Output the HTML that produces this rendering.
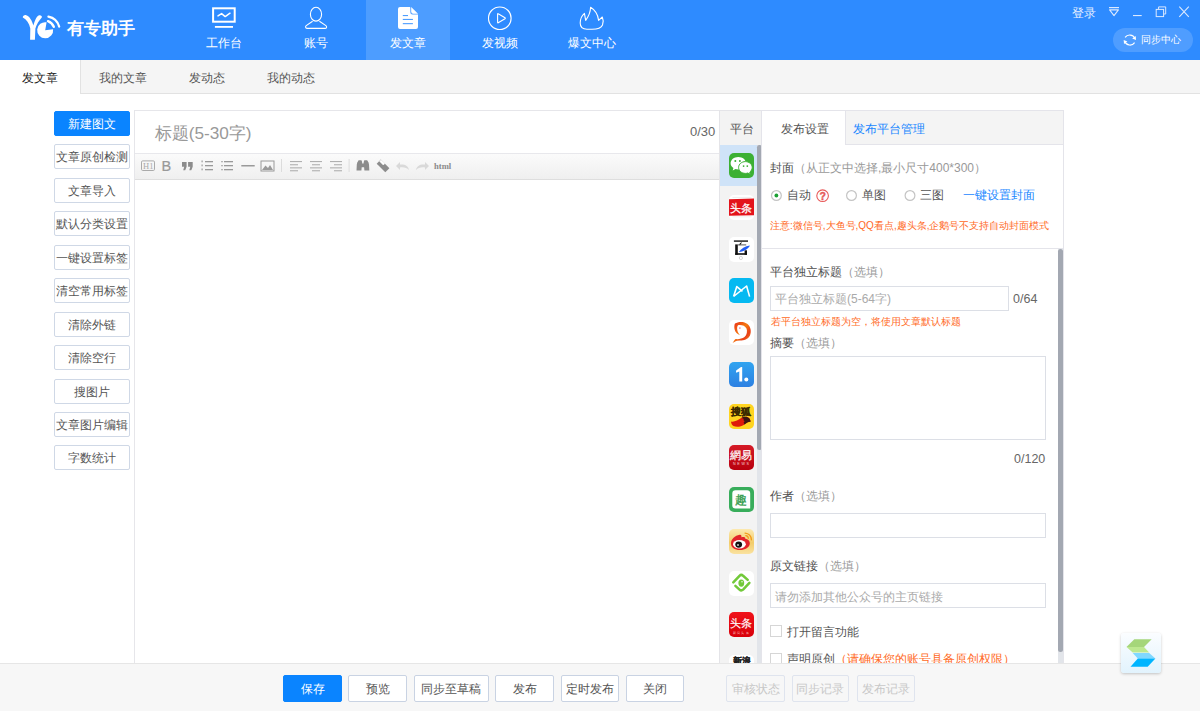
<!DOCTYPE html>
<html><head><meta charset="utf-8">
<style>
*{margin:0;padding:0;box-sizing:border-box}
html,body{width:1200px;height:711px;overflow:hidden;background:#fff;font-family:"Liberation Sans",sans-serif;font-size:12px;color:#333}
.a{position:absolute}
.t{position:absolute;white-space:nowrap;line-height:20px}
#hdr{left:0;top:0;width:1200px;height:60px;background:#2e8bff}
.nav{position:absolute;top:0;width:84px;height:60px;color:#fff;text-align:center}
.nav .lbl{position:absolute;left:0;width:84px;top:33px;line-height:20px;font-size:12px}
.nav svg{position:absolute;left:26px;top:2px}
.lbtn{position:absolute;left:54px;width:75.5px;height:25px;border:1px solid #cfd8e6;border-radius:2px;background:#fff;color:#555;text-align:center;line-height:25px;font-size:12px;white-space:nowrap;overflow:visible}
.fbtn{position:absolute;top:675px;height:27px;border:1px solid #c9d3e3;border-radius:2px;background:#fff;color:#555;text-align:center;line-height:27px;font-size:12px;white-space:nowrap}
.pic{position:absolute;left:729px;width:25px;height:25px;border-radius:5px;overflow:hidden}
.lab{position:absolute;left:770px;white-space:nowrap;line-height:20px;font-size:12px;color:#505050}
.lab span{color:#999}
.inp{position:absolute;left:770px;background:#fff;border:1px solid #dcdfe6}
.org{color:#ff6a26}
</style></head><body>

<!-- HEADER -->
<div id="hdr" class="a"></div>
<div class="a" style="left:366px;top:0;width:84px;height:60px;background:#4d9dff"></div>
<svg class="a" style="left:18px;top:8px" width="48" height="38" viewBox="0 0 48 38">
 <path d="M4.8 9.6 C4.6 8 6.4 6.8 8.2 7.2 C11.5 8.2 14 12.5 15.4 17.4 C16.8 12.5 18.5 8.5 20.6 7.4 C22.4 6.6 24.4 7.8 23.8 9.4 C21 12.5 18.6 16 17.4 20.5 L16.9 31.8 L12.1 31.8 L12.3 20.5 C11.2 15.5 8.5 11.5 4.8 9.6 Z" fill="#fff"/>
 <path d="M27.2 22.2 L28.6 14.3 A8 8 0 1 0 35.1 21.2 Z" fill="#fff"/>
 <path d="M30 13.2 A9.8 9.8 0 0 1 35.8 18.8" stroke="#fff" stroke-width="2.4" fill="none" stroke-linecap="round"/>
 <path d="M30.4 8.6 A14.2 14.2 0 0 1 41.2 18.6" stroke="#fff" stroke-width="2.2" fill="none" stroke-linecap="round"/>
</svg>
<div class="t" style="left:67px;top:18.5px;font-size:17px;color:#fff;font-weight:bold;">有专助手</div>

<!-- nav items -->
<div class="nav" style="left:182px">
 <svg width="32" height="30" viewBox="0 0 32 30"><g transform="translate(-208 -2)">
  <rect x="213.1" y="8.3" width="21.6" height="13.4" fill="none" stroke="#fff" stroke-width="2"/>
  <path d="M218 15.9 L221.6 13.6 L225.2 16.6 L230 13.2" fill="none" stroke="#fff" stroke-width="1.5" stroke-linecap="round" stroke-linejoin="round"/>
  <rect x="214.9" y="26" width="18.1" height="1.8" fill="#fff"/>
 </g></svg>
 <div class="lbl">工作台</div>
</div>
<div class="nav" style="left:274px">
 <svg width="32" height="30" viewBox="0 0 32 30"><g transform="translate(-300 -2)">
  <ellipse cx="316" cy="14.2" rx="5.6" ry="6.9" fill="none" stroke="#fff" stroke-width="1.1"/>
  <path d="M312.6 21.2 L306.2 25.6 Q305.4 26.2 305.6 27.2 Q305.8 28.4 307 28.4 L325.3 28.4 Q326.5 28.4 326.6 27.2 Q326.7 26.2 325.9 25.6 L319.4 21.2" fill="none" stroke="#fff" stroke-width="1.1" stroke-linejoin="round"/>
 </g></svg>
 <div class="lbl">账号</div>
</div>
<div class="nav" style="left:366px">
 <svg width="32" height="30" viewBox="0 0 32 30"><g transform="translate(-392 -2)">
  <path d="M400 7.1 L409.8 7.1 L410.3 7.6 L410.3 12.2 Q410.3 14.6 412.6 14.6 L418 14.6 L418 27 Q418 29 416 29 L400 29 Q398 29 398 27 L398 9.1 Q398 7.1 400 7.1 Z" fill="#fff"/>
  <path d="M411.2 7.1 L418 13.8 L413.2 13.8 Q411.2 13.8 411.2 11.8 Z" fill="#fff"/>
  <rect x="402.8" y="15" width="5.2" height="1.1" fill="#4d9dff"/>
  <rect x="402.8" y="18.9" width="10.1" height="1.1" fill="#4d9dff"/>
  <rect x="402.8" y="23.1" width="10.1" height="1.1" fill="#4d9dff"/>
 </g></svg>
 <div class="lbl">发文章</div>
</div>
<div class="nav" style="left:458px">
 <svg width="32" height="30" viewBox="0 0 32 30"><g transform="translate(-484 -2)">
  <circle cx="499.8" cy="18.25" r="11.3" fill="none" stroke="#fff" stroke-width="1.1"/>
  <path d="M498.2 13.8 Q497.6 13.4 497.6 14.2 L497.6 22.4 Q497.6 23.2 498.2 22.8 L505 18.7 Q505.6 18.25 505 17.8 Z" fill="none" stroke="#fff" stroke-width="1.1" stroke-linejoin="round"/>
 </g></svg>
 <div class="lbl">发视频</div>
</div>
<div class="nav" style="left:550px">
 <svg width="32" height="30" viewBox="0 0 32 30"><g transform="translate(-576 -2)">
  <path d="M590.6 7.3 C595 10 598 14.5 598.6 20.4 L602.3 17 C603.4 19.5 603.4 22.5 602.5 25 C601 28.5 597 29.2 592 29.2 L587 29.2 C583 29.2 580.2 27 580.2 23 C580.2 18.5 582 15.5 584.4 13.4 L585.7 20.4 C588.5 16.5 590.5 12 590.6 7.3 Z" fill="none" stroke="#fff" stroke-width="1.1" stroke-linejoin="round"/>
 </g></svg>
 <div class="lbl">爆文中心</div>
</div>

<!-- window controls -->
<div class="t" style="left:1072px;top:2.5px;color:#e6f0ff;font-size:12px">登录</div>
<svg class="a" style="left:1100px;top:0" width="100" height="30" viewBox="1100 0 100 30">
 <rect x="1109" y="7" width="10" height="1.2" fill="#dbe9ff"/>
 <path d="M1109.6 9.9 L1118.4 9.9 L1114 15.6 Z" fill="none" stroke="#dbe9ff" stroke-width="1.1" stroke-linejoin="round"/>
 <rect x="1133" y="15" width="8.7" height="1.1" fill="#dbe9ff"/>
 <rect x="1156.2" y="9.4" width="7.4" height="7.2" fill="none" stroke="#dbe9ff" stroke-width="1"/>
 <path d="M1158.6 9.2 L1158.6 6.9 L1165.7 6.9 L1165.7 14 L1163.8 14" fill="none" stroke="#dbe9ff" stroke-width="1"/>
 <path d="M1179.3 6.7 L1188.8 16.8 M1188.8 6.7 L1179.3 16.8" stroke="#dbe9ff" stroke-width="1.1"/>
</svg>
<div class="a" style="left:1112.5px;top:28.3px;width:80px;height:23.4px;border-radius:12px;background:rgba(255,255,255,0.16)"></div>
<svg class="a" style="left:1118px;top:28px" width="30" height="24" viewBox="1118 28 30 24">
 <path d="M1125.1 37.4 A5.7 5.7 0 0 1 1134.9 38.3" fill="none" stroke="#fff" stroke-width="1.2"/>
 <path d="M1132.2 38.4 L1136 39.9 L1135.7 35.9 Z" fill="#fff"/>
 <path d="M1134.6 42.6 A5.7 5.7 0 0 1 1124.7 41.6" fill="none" stroke="#fff" stroke-width="1.2"/>
 <path d="M1127.4 41.5 L1123.7 40 L1124 44 Z" fill="#fff"/>
</svg>
<div class="t" style="left:1140.7px;top:30.3px;color:#fff;font-size:10px">同步中心</div>

<!-- TAB BAR -->
<div class="a" style="left:80px;top:60px;width:1120px;height:34px;background:#f5f5f5;border-left:1px solid #e2e2e2;border-bottom:1px solid #e2e2e2"></div>
<div class="t" style="left:22px;top:68px;color:#222">发文章</div>
<div class="t" style="left:99px;top:68px;color:#555">我的文章</div>
<div class="t" style="left:189px;top:68px;color:#555">发动态</div>
<div class="t" style="left:266.5px;top:68px;color:#555">我的动态</div>


<!-- LEFT BUTTONS -->
<div class="lbtn" style="top:111.00px;background:#0a84ff;border-color:#0a84ff;color:#fff">新建图文</div>
<div class="lbtn" style="top:144.44px">文章原创检测</div>
<div class="lbtn" style="top:177.88px">文章导入</div>
<div class="lbtn" style="top:211.32px">默认分类设置</div>
<div class="lbtn" style="top:244.76px">一键设置标签</div>
<div class="lbtn" style="top:278.20px">清空常用标签</div>
<div class="lbtn" style="top:311.64px">清除外链</div>
<div class="lbtn" style="top:345.08px">清除空行</div>
<div class="lbtn" style="top:378.52px">搜图片</div>
<div class="lbtn" style="top:411.96px">文章图片编辑</div>
<div class="lbtn" style="top:445.40px">字数统计</div>

<!-- EDITOR -->
<div class="a" style="left:134px;top:110px;width:587px;height:560px;border:1px solid #e6e6ea;background:#fff"></div>
<div class="t" style="left:154.7px;top:122.5px;font-size:17.2px;color:#999">标题(5-30字)</div>
<div class="t" style="left:690px;top:122px;font-size:13px;color:#666">0/30</div>
<div class="a" style="left:135px;top:153px;width:585px;height:27px;border-top:1px solid #e8e8ec;border-bottom:1px solid #dedede;background:linear-gradient(#fbfbfb,#efefef)"></div>
<svg class="a" style="left:135px;top:153px" width="330" height="27" viewBox="135 153 330 27">
 <g fill="none" stroke="#9a9a9a">
  <rect x="141.5" y="160.9" width="13" height="9.6" rx="1.2" stroke-width="1" stroke="#aaa"/>
 </g>
 <text x="143" y="168.8" font-family="Liberation Serif" font-size="8.5" fill="#aaa">H1</text>
 <text x="161.5" y="171" font-family="Liberation Sans" font-size="14.5" fill="#999" stroke="#999" stroke-width="0.2">B</text>
 <path d="M182 162 L186.6 162 L186.6 166.8 L185.2 170.2 L183.2 170.2 L184.2 166.8 L182 166.8 Z M188.1 162 L192.7 162 L192.7 166.8 L191.3 170.2 L189.3 170.2 L190.3 166.8 L188.1 166.8 Z" fill="#8c8c8c"/>
 <g fill="#9a9a9a">
  <rect x="205" y="161" width="8" height="1.3"/><rect x="205" y="165" width="8" height="1.3"/><rect x="205" y="169" width="8" height="1.3"/>
  <rect x="201.5" y="160.5" width="1.2" height="1.8"/><rect x="201.5" y="164.5" width="1.2" height="1.8"/><rect x="201.5" y="168.5" width="1.2" height="1.8"/>
  <rect x="224" y="161" width="9" height="1.3"/><rect x="224" y="165" width="9" height="1.3"/><rect x="224" y="169" width="9" height="1.3"/>
  <rect x="221.3" y="161" width="1.4" height="1.3"/><rect x="221.3" y="165" width="1.4" height="1.3"/><rect x="221.3" y="169" width="1.4" height="1.3"/>
  <rect x="241.3" y="165" width="13.4" height="1.5"/>
  <rect x="281" y="159" width="1" height="13" fill="#dcdcdc"/>
  <g fill="#b0b0b0">
  <rect x="290" y="161" width="12" height="1.1"/><rect x="290" y="164.2" width="8" height="1.1"/><rect x="290" y="167.3" width="12" height="1.1"/><rect x="290" y="170.2" width="8" height="1.1"/>
  <rect x="310" y="161" width="12" height="1.1"/><rect x="312" y="164.2" width="8" height="1.1"/><rect x="310" y="167.3" width="12" height="1.1"/><rect x="312" y="170.2" width="8" height="1.1"/>
  <rect x="330" y="161" width="12" height="1.1"/><rect x="334" y="164.2" width="8" height="1.1"/><rect x="330" y="167.3" width="12" height="1.1"/><rect x="334" y="170.2" width="8" height="1.1"/>
  </g>
  <rect x="348.6" y="159" width="1" height="13" fill="#dcdcdc"/>
 </g>
 <g fill="none" stroke="#9a9a9a" stroke-width="1">
  <rect x="261" y="161" width="13" height="10"/>
 </g>
 <path d="M262 170 L265.5 165.5 L268 168 L270 165 L273 170 Z" fill="#9a9a9a"/>
 <path d="M356.5 170.6 L356.8 164.5 Q357 162 358.2 161 L358.6 160.3 L361.4 160.3 L361.8 161 Q362.2 162 362.2 163.5 L363.6 163.5 Q363.6 162 364 161 L364.4 160.3 L367.2 160.3 L367.6 161 Q368.8 162 369 164.5 L369.3 170.6 L364.4 170.6 L364.1 167.2 L361.7 167.2 L361.4 170.6 Z" fill="#8c8c8c"/>
 <path d="M380.8 159.6 L389.4 168.3 L385.3 172.3 L376.7 163.7 Z" fill="#8c8c8c"/>
 <path d="M379.6 161.3 L381 159.9 L384.7 163.6 L383.3 165 Z" fill="#fff" stroke="#fff" stroke-width="0.6"/>
 <path d="M409 170 C408.5 166 405 164 400 164.5 L400 162 L396 166 L400 170 L400 167.5 C404 167 407 168 409 170 Z" fill="#d9d9d9"/>
 <path d="M416 170 C416.5 166 420 164 425 164.5 L425 162 L429 166 L425 170 L425 167.5 C421 167 418 168 416 170 Z" fill="#d9d9d9"/>
 <text x="434" y="168.8" font-family="Liberation Serif" font-weight="bold" font-size="8.6" fill="#8a8a8a">html</text>
</svg>

<!-- PLATFORM COLUMN -->
<div class="a" style="left:719px;top:110px;width:43px;height:560px;background:#f3f3f3;border:1px solid #e4e4e8"></div>
<div class="t" style="left:729.5px;top:119px;color:#555">平台</div>
<div class="a" style="left:720px;top:145px;width:37.5px;height:40.5px;background:#cfe3f8"></div>
<div class="a" style="left:757.2px;top:145px;width:4.6px;height:518px;background:#e2e5ea"></div>
<div class="a" style="left:757.2px;top:145px;width:4.6px;height:305px;background:#a3a8b2;border-radius:2.3px"></div>

<svg class="a" style="left:729px;top:153px" width="25" height="25" viewBox="0 0 25 25"><rect width="25" height="25" rx="5" fill="#3cb034"/>
<path d="M9.3 4 C4.9 4 1.6 6.9 1.6 10.3 C1.6 12.3 2.7 14 4.4 15.1 L3.7 17.4 L6.5 16.1 C7.4 16.4 8.4 16.6 9.3 16.6 C13.7 16.6 17 13.8 17 10.3 C17 6.9 13.7 4 9.3 4 Z" fill="#fff"/>
<circle cx="6.3" cy="8" r="1" fill="#3cb034"/><circle cx="10.9" cy="8" r="1" fill="#3cb034"/>
<path d="M16.4 8.6 C12.7 8.6 9.6 11.1 9.6 14.5 C9.6 17.9 12.7 20.4 16.4 20.4 C17.2 20.4 18 20.3 18.7 20 L21.4 21.3 L20.8 19 C22.2 18 23.2 16.4 23.2 14.5 C23.2 11.1 20.1 8.6 16.4 8.6 Z" fill="#fff" stroke="#3cb034" stroke-width="1"/>
<circle cx="14.6" cy="13.1" r="0.9" fill="#3cb034"/><circle cx="18.3" cy="13.1" r="0.9" fill="#3cb034"/></svg>
<svg class="a" style="left:729px;top:194.8px" width="25" height="25" viewBox="0 0 25 25"><rect width="25" height="25" rx="5" fill="#fff"/>
<rect x="3.5" y="2.4" width="19" height="0.6" fill="#e4e4e4"/>
<path d="M0 4.2 L25 3.6 L25 20.2 L0 20.8 Z" fill="#e3141b"/>
<rect x="3.5" y="21.6" width="19" height="0.6" fill="#e4e4e4"/>
<text x="12.3" y="16.8" text-anchor="middle" font-family="Liberation Sans" font-size="11" fill="#fff" stroke="#fff" stroke-width="0.25">头条</text></svg>
<svg class="a" style="left:729px;top:236.6px" width="25" height="25" viewBox="0 0 25 25"><rect width="25" height="25" rx="5" fill="#fff"/>
<rect x="4.9" y="3.3" width="14.1" height="1.6" fill="#333"/>
<path d="M10.2 7.2 L12.7 4.7 L12.3 6.5 L10.9 8.4 Z" fill="#111"/>
<rect x="6.2" y="7.4" width="2.6" height="10.4" fill="#111"/>
<rect x="8.8" y="7.4" width="8.4" height="1" fill="#555"/>
<rect x="15.6" y="13.3" width="2.4" height="4.5" fill="#111"/>
<rect x="6.2" y="16.2" width="11.8" height="1.6" fill="#111"/>
<path d="M9.8 15 C12 11.5 16 9 20.9 8.4 C19.5 11.5 15.5 14.3 9.8 15 Z" fill="#1f5cf5"/>
<circle cx="11.9" cy="21" r="1.6" fill="none" stroke="#bbb" stroke-width="0.6"/>
</svg>
<svg class="a" style="left:729px;top:278.4px" width="25" height="25" viewBox="0 0 25 25"><rect width="25" height="25" rx="5" fill="#05b9f1"/>
<path d="M4.6 18.5 L7.8 8.6 L13.5 13.3 M4.6 18.5 L17.6 8 L20.6 18.6" fill="none" stroke="#fff" stroke-width="1.6" stroke-linejoin="round"/></svg>
<svg class="a" style="left:729px;top:320.2px" width="25" height="25" viewBox="0 0 25 25"><rect width="25" height="25" rx="5" fill="#fff"/>
<defs><linearGradient id="gf" x1="0" y1="0" x2="1" y2="1"><stop offset="0" stop-color="#e8281a"/><stop offset="0.45" stop-color="#f57a10"/><stop offset="0.7" stop-color="#e8401a"/><stop offset="1" stop-color="#ffa010"/></linearGradient></defs>
<path d="M6 3.5 C9 1.5 15 1 18.5 4 C22 7 22.5 12 21 15.5 C19 19.5 15 20.5 11 20.5 L8 20.8 C6 21.5 4.5 22.5 3.5 23.3 C4.5 21.5 5.5 19.8 6.5 19 C9 19.5 13 18.8 15.5 17 C18 15 18.5 11 17.5 8.5 C16 5.5 12.5 4.5 9.5 5 C8 5.5 8 8 8.3 10 C8.7 12.5 10 14 11.1 15.2 C8.5 14.5 6 12 5.5 9 C5.2 7 5.3 4.5 6 3.5 Z" fill="url(#gf)"/>
<circle cx="10.9" cy="8.1" r="0.8" fill="#f07080"/>
</svg>
<svg class="a" style="left:729px;top:361.9px" width="25" height="25" viewBox="0 0 25 25"><defs><linearGradient id="gy" x1="0" y1="0" x2="0" y2="1"><stop offset="0" stop-color="#31a4f0"/><stop offset="1" stop-color="#2d80e2"/></linearGradient></defs>
<rect width="25" height="25" rx="5" fill="url(#gy)"/>
<path d="M7 9.2 Q7 8.4 7.8 8 L11.6 5.3 Q12 4.9 12.6 4.9 L13.2 4.9 L13.2 19.6 L10.3 19.6 L10.3 9.4 L7.2 10.8 Z" fill="#fff"/>
<circle cx="17.3" cy="17.6" r="2" fill="#fff"/></svg>
<svg class="a" style="left:729px;top:403.6px" width="25" height="25" viewBox="0 0 25 25"><rect width="25" height="25" rx="5" fill="#ffd420"/>
<text x="12.3" y="10.8" text-anchor="middle" font-family="Liberation Sans" font-weight="bold" font-size="10" fill="#3a2a00" stroke="#3a2a00" stroke-width="0.25">搜狐</text>
<path d="M2 17.5 C5 18.5 9 16 12.5 13.8 C15 12.3 18.5 12 20.5 14.5 C21.2 15.5 21.6 16.8 21.6 17.8 C19.5 17.5 17.5 19 15.5 20.5 C12 22.8 7.5 23.5 4.5 22 C3 21 2.2 19.5 2 17.5 Z" fill="#de1a0a"/>
<path d="M12.5 13.8 C15 12.3 18.5 12 20.5 14.5 C21.2 15.5 21.6 16.8 21.6 17.8 C19.5 17.5 17.5 19 15.5 20.5 L14.6 18.4 L15.6 17.2 L14.3 16 L15 15 Z" fill="#3a1610"/>
</svg>
<svg class="a" style="left:729px;top:445.3px" width="25" height="25" viewBox="0 0 25 25"><defs><linearGradient id="gw" x1="0" y1="0" x2="0" y2="1"><stop offset="0" stop-color="#d51a26"/><stop offset="1" stop-color="#b8000e"/></linearGradient></defs>
<rect width="25" height="25" rx="5" fill="url(#gw)"/>
<text x="12.3" y="14.2" text-anchor="middle" font-family="Liberation Sans" font-size="10.5" fill="#fff" stroke="#fff" stroke-width="0.2">網易</text>
<text x="12.8" y="19.8" text-anchor="middle" font-family="Liberation Sans" font-size="3.6" letter-spacing="1.7" fill="#f4d0d0">NEWS</text></svg>
<svg class="a" style="left:729px;top:487px" width="25" height="25" viewBox="0 0 25 25"><rect width="25" height="25" rx="5" fill="#38ad5b"/>
<path d="M6.5 3.3 L18 3.3 Q21.2 3.3 21.2 6.5 L21.2 21.4 L6.5 21.4 Q3.3 21.4 3.3 18.2 L3.3 6.5 Q3.3 3.3 6.5 3.3 Z" fill="#fff"/>
<text x="12" y="17.4" text-anchor="middle" font-family="Liberation Sans" font-size="11.5" fill="#2f9a4a" stroke="#2f9a4a" stroke-width="0.3">趣</text></svg>
<svg class="a" style="left:729px;top:528.9px" width="25" height="25" viewBox="0 0 25 25"><defs><linearGradient id="gb" x1="0" y1="0" x2="0" y2="1"><stop offset="0" stop-color="#fce9b0"/><stop offset="0.55" stop-color="#f2cc6a"/><stop offset="1" stop-color="#fae2a0"/></linearGradient></defs>
<rect width="25" height="25" rx="5" fill="url(#gb)"/>
<path d="M2 14.5 C2 10 6 6.5 10.7 5.8 C12.2 5.6 12.8 6.8 12.3 8.3 C14.5 7.6 16.5 7.8 16.3 9.8 C19 10.3 21 12 20.8 14.5 C20.6 18.5 16 21 11 21 C5.5 21 2 18.5 2 14.5 Z" fill="#e2232a"/>
<ellipse cx="10.4" cy="15.2" rx="6.4" ry="4.2" fill="#fff"/>
<ellipse cx="9.7" cy="15.6" rx="3.4" ry="3.1" fill="#111"/>
<ellipse cx="9" cy="16" rx="1.1" ry="0.8" fill="#fff"/>
<path d="M16.1 4.1 C19.5 4.3 22.2 7 22.4 10.8" fill="none" stroke="#f29a18" stroke-width="1.4" stroke-linecap="round"/>
<path d="M16.8 6.6 C18.3 6.8 19.3 8 19.3 9.3" fill="none" stroke="#f29a18" stroke-width="1.2" stroke-linecap="round"/>
</svg>
<svg class="a" style="left:729px;top:570.9px" width="25" height="25" viewBox="0 0 25 25"><rect width="25" height="25" rx="5" fill="#fff"/>
<path d="M4.3 11.4 L10.5 4.8 Q12.3 3 14.1 4.8 L18.7 8.9" fill="none" stroke="#72c93a" stroke-width="2.5" stroke-linecap="round" stroke-linejoin="round"/>
<path d="M6.4 14.8 L10.5 18.6 Q12.3 20.2 14.1 18.6 L20.4 11.9" fill="none" stroke="#72c93a" stroke-width="2.5" stroke-linecap="round" stroke-linejoin="round"/>
<ellipse cx="12.3" cy="12.1" rx="2.9" ry="3.6" fill="#72c93a"/>
<circle cx="13" cy="10.8" r="0.8" fill="#e8f8e0"/>
</svg>
<svg class="a" style="left:729px;top:612.3px" width="25" height="25" viewBox="0 0 25 25"><defs><linearGradient id="gt" x1="0" y1="0" x2="0" y2="1"><stop offset="0" stop-color="#f0121a"/><stop offset="1" stop-color="#d8000a"/></linearGradient></defs>
<rect width="25" height="25" rx="5" fill="url(#gt)"/>
<text x="12.4" y="15.2" text-anchor="middle" font-family="Liberation Sans" font-size="11" fill="#fff" stroke="#fff" stroke-width="0.15">头条</text>
<text x="12.5" y="21.5" text-anchor="middle" font-family="Liberation Sans" font-size="3" letter-spacing="1.2" fill="#f6b0b0">新闻头条</text>
</svg>
<svg class="a" style="left:729px;top:654.5px" width="25" height="25" viewBox="0 0 25 25"><rect width="25" height="25" rx="5" fill="#fff"/>
<text x="12.8" y="9.2" text-anchor="middle" font-family="Liberation Sans" font-weight="bold" font-size="8.5" fill="#222" stroke="#222" stroke-width="0.3">新浪</text></svg>

<!-- FORM PANEL -->
<div class="a" style="left:761px;top:110px;width:303px;height:560px;background:#fff;border:1px solid #e4e4ea"></div>
<div class="a" style="left:845.3px;top:111px;width:217.7px;height:33.5px;background:#f4f4f4;border-left:1px solid #e4e4ea;border-bottom:1px solid #e4e4ea"></div>
<div class="t" style="left:780.5px;top:118.5px;color:#555">发布设置</div>
<div class="t" style="left:852.5px;top:118.5px;color:#1a87ff">发布平台管理</div>
<div class="lab" style="top:158px">封面<span>（从正文中选择,最小尺寸400*300）</span></div>
<!-- radios -->
<svg class="a" style="left:770px;top:188px" width="160" height="16" viewBox="770 188 160 16">
 <circle cx="776.4" cy="195.5" r="4.9" fill="#fff" stroke="#c4c4c4" stroke-width="1.2"/>
 <circle cx="776.4" cy="195.5" r="1.9" fill="#1aa032"/>
 <circle cx="822.6" cy="195.7" r="5.8" fill="none" stroke="#e85a5a" stroke-width="1.1"/>
 <text x="822.6" y="199.6" text-anchor="middle" font-family="Liberation Sans" font-weight="bold" font-size="10.5" fill="#e65a5a" stroke="#e65a5a" stroke-width="0.4">?</text>
 <circle cx="851.5" cy="195.5" r="4.9" fill="#fff" stroke="#c4c4c4" stroke-width="1.2"/>
 <circle cx="910" cy="195.5" r="4.9" fill="#fff" stroke="#c4c4c4" stroke-width="1.2"/>
</svg>

<div class="t" style="left:787px;top:185px;color:#555">自动</div>
<div class="t" style="left:861.8px;top:185px;color:#555">单图</div>
<div class="t" style="left:920.4px;top:185px;color:#555">三图</div>
<div class="t" style="left:962.6px;top:185px;color:#1a87ff">一键设置封面</div>
<div class="t org" style="left:770px;top:215.5px;font-size:10px">注意:微信号,大鱼号,QQ看点,趣头条,企鹅号不支持自动封面模式</div>
<div class="a" style="left:762px;top:248px;width:301px;height:1px;background:#e4e4ea"></div>
<div class="a" style="left:1058px;top:249px;width:5px;height:414px;background:#e2e5ea"></div>
<div class="a" style="left:1058px;top:249px;width:5px;height:403px;background:#a3a8b2;border-radius:2.5px"></div>

<div class="lab" style="top:262px">平台独立标题<span>（选填）</span></div>
<div class="inp" style="top:286px;width:239px;height:25px"></div>
<div class="t" style="left:775px;top:289px;color:#aaa">平台独立标题(5-64字)</div>
<div class="t" style="left:1013px;top:289px;color:#666;font-size:12.5px">0/64</div>
<div class="t org" style="left:770.5px;top:311.5px;font-size:10px">若平台独立标题为空，将使用文章默认标题</div>
<div class="lab" style="top:333px">摘要<span>（选填）</span></div>
<div class="inp" style="top:356px;width:276px;height:83.5px"></div>
<div class="t" style="left:1014px;top:448.5px;color:#666;font-size:12.5px">0/120</div>
<div class="lab" style="top:486px">作者<span>（选填）</span></div>
<div class="inp" style="top:513.3px;width:276px;height:24.5px"></div>
<div class="lab" style="top:556px">原文链接<span>（选填）</span></div>
<div class="inp" style="top:583.2px;width:276px;height:24.5px"></div>
<div class="t" style="left:775px;top:587px;color:#aaa">请勿添加其他公众号的主页链接</div>
<div class="a" style="left:770.2px;top:625.1px;width:11.5px;height:11.5px;border:1px solid #d6d6d6;background:#fff"></div>
<div class="t" style="left:787px;top:622px;color:#555">打开留言功能</div>
<div class="a" style="left:770.2px;top:653px;width:11.5px;height:11.5px;border:1px solid #d6d6d6;background:#fff"></div>
<div class="t" style="left:787px;top:648.5px;color:#555">声明原创<span class="org">（请确保您的账号具备原创权限）</span></div>

<!-- FOOTER -->
<div class="a" style="left:0;top:663px;width:1200px;height:48px;background:#f7f7f7;border-top:1px solid #e6e6e6"></div>
<div class="fbtn" style="left:283.3px;width:58.5px;background:#0a84ff;border-color:#0a84ff;color:#fff">保存</div>
<div class="fbtn" style="left:348.2px;width:58.7px">预览</div>
<div class="fbtn" style="left:413.5px;width:75.5px">同步至草稿</div>
<div class="fbtn" style="left:495.25px;width:58.7px">发布</div>
<div class="fbtn" style="left:560.9px;width:58.1px">定时发布</div>
<div class="fbtn" style="left:626.2px;width:58.1px">关闭</div>
<div class="fbtn" style="left:726.4px;width:58.3px;color:#c8c8c8;border-color:#dfe4ee;background:#f7f7f7">审核状态</div>
<div class="fbtn" style="left:791.5px;width:57.9px;color:#c8c8c8;border-color:#dfe4ee;background:#f7f7f7">同步记录</div>
<div class="fbtn" style="left:856.75px;width:57.75px;color:#c8c8c8;border-color:#dfe4ee;background:#f7f7f7">发布记录</div>
<div class="a" style="left:1121px;top:633px;width:40px;height:40px;border-radius:3px;background:linear-gradient(#fbfdff,#e2f3fd);box-shadow:0 1px 3px rgba(0,0,0,0.22)"></div>
<svg class="a" style="left:1121px;top:633px" width="40" height="40" viewBox="0 0 40 40">
 <path d="M13.3 6.2 L30.7 6.2 L23 13.9 L5.5 13.9 Z" fill="#a5d67a"/>
 <path d="M5.5 13.9 L23 13.9 L28.2 19.5 L11.7 19.5 Z" fill="#bde890"/>
 <path d="M11.7 20 L28.2 20 L34.4 25.6 L16.8 25.6 Z" fill="#80d8ff"/>
 <path d="M16.8 25.6 L34.4 25.6 L26.7 33.7 L9.5 33.7 Z" fill="#00b5ff"/>
</svg>

</body></html>
